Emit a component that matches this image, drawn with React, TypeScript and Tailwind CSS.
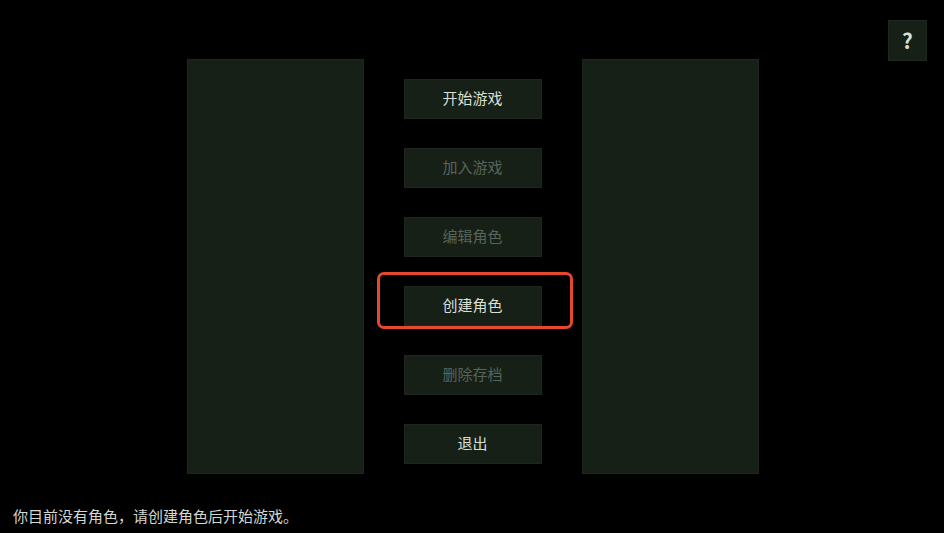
import React from "react";

const font = { fontFamily: '"Noto Sans CJK SC", "Noto Sans", sans-serif' };

const menu = [
  { label: "开始游戏", enabled: true },
  { label: "加入游戏", enabled: false },
  { label: "编辑角色", enabled: false },
  { label: "创建角色", enabled: true, highlight: true },
  { label: "删除存档", enabled: false },
  { label: "退出", enabled: true },
];

function MenuButton({ label, enabled, highlight }: { label: string; enabled: boolean; highlight?: boolean }) {
  return (
    <div className="relative">
      <button
        className={`w-[138px] h-[40px] pb-[2px] bg-[#172017] border border-[#1d271d] text-[15px] flex items-center justify-center ${
          enabled ? "text-[#d9dfd5]" : "text-[#56645a]"
        }`}
      >
        {label}
      </button>
      {highlight && (
        <div className="absolute left-[-27px] top-[-14px] w-[196px] h-[57px] border-[3px] border-[#e5472f] rounded-[7px] pointer-events-none" />
      )}
    </div>
  );
}

export default function App() {
  return (
    <div className="relative w-[944px] h-[533px] bg-black overflow-hidden" style={font}>
      {/* help */}
      <button className="absolute left-[888px] top-[20px] w-[39px] h-[41px] bg-[#172017] border border-[#1d271d] text-[#d9dfd5] text-[21px] font-bold flex items-center justify-center">
        ?
      </button>

      <div className="flex justify-center pt-[59px] pl-[1px]">
        <div className="w-[177px] h-[415px] bg-[#172017] border border-[#1d271d]" />
        <div className="flex flex-col gap-[29px] pt-[20px] mx-[40px]">
          {menu.map((m) => (
            <MenuButton key={m.label} {...m} />
          ))}
        </div>
        <div className="w-[177px] h-[415px] bg-[#172017] border border-[#1d271d]" />
      </div>

      <div className="absolute left-[13px] top-[505px] text-[15px] text-[#d3d7d1]">
        你目前没有角色，请创建角色后开始游戏。
      </div>
    </div>
  );
}
